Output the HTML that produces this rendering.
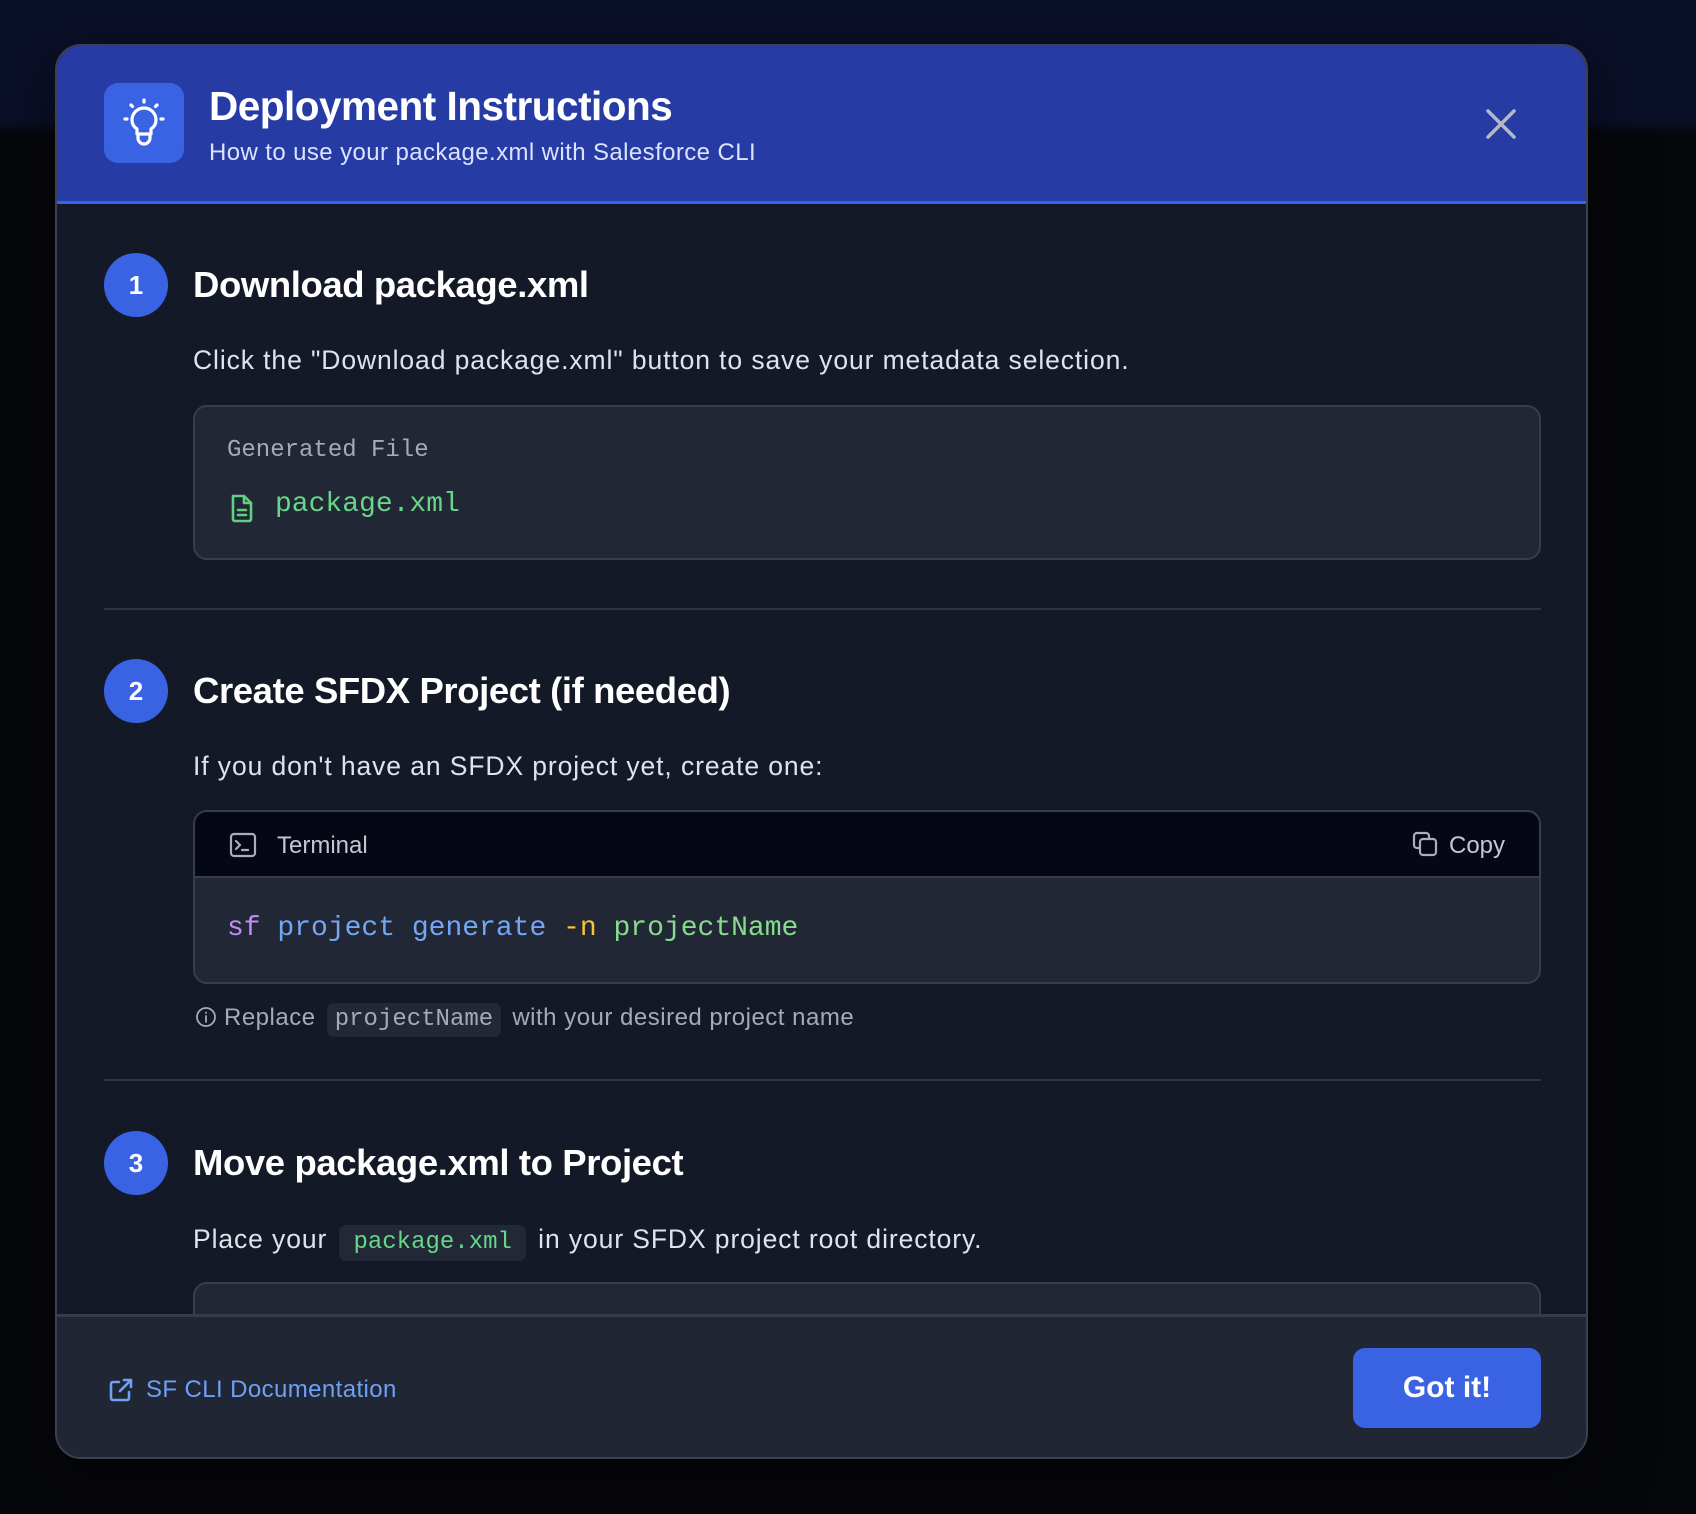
<!DOCTYPE html>
<html><head><meta charset="utf-8"><style>
*{box-sizing:border-box;margin:0;padding:0}
html,body{width:1696px;height:1514px;overflow:hidden}
body{background:linear-gradient(#0b1029 0,#0b1029 120px,#06070b 135px,#06070b 100%);font-family:"Liberation Sans",sans-serif;position:relative}
.modal{position:absolute;left:55px;top:44px;width:1533px;height:1415px;border-radius:26px;border:2px solid #394152;background:#131927;overflow:hidden;box-shadow:0 20px 60px rgba(0,0,0,.6)}
.hdr{position:absolute;left:0;top:0;right:0;height:158px;background:#263ca4;border-bottom:3px solid #3a62e6}
.ibox{position:absolute;left:47px;top:37px;width:80px;height:80px;border-radius:14px;background:#3a63e4}
.title{position:absolute;left:152px;top:37px;color:#fff;font-weight:bold;font-size:40.5px;letter-spacing:-0.5px}
.sub{position:absolute;left:152px;top:93px;color:#dbe3ff;font-size:24px;letter-spacing:0.4px}
.close{position:absolute;left:1428px;top:62px}
.abs{position:absolute}
.circ{position:absolute;left:47px;width:64px;height:64px;border-radius:50%;background:#3a63e4;color:#fff;font-weight:bold;font-size:26px;text-align:center;line-height:64px}
.h{position:absolute;left:136px;color:#fff;font-weight:bold;font-size:36.5px;letter-spacing:-0.4px;line-height:40px}
.p{position:absolute;left:136px;color:#dfe3ea;font-size:26.5px;letter-spacing:0.9px;line-height:30px}
.box{position:absolute;left:136px;width:1348px;border:2px solid #363d4b;border-radius:14px;background:#212735;overflow:hidden}
.mono{font-family:"Liberation Mono",monospace;letter-spacing:0}
.div{position:absolute;left:47px;width:1437px;height:2px;background:#2d3443}
.chip{display:inline-block;background:#222835;border-radius:7px;padding:0 8px;font-family:"Liberation Mono",monospace;letter-spacing:0}
.ftr{position:absolute;left:0;right:0;top:1268px;bottom:0;background:#202634;border-top:3px solid #353c4b}
</style></head><body>
<div class="modal">
 <div class="hdr">
  <div class="ibox"><svg width="80" height="80" viewBox="0 0 80 80" fill="none" stroke="#fff" stroke-width="3.2" stroke-linecap="round" stroke-linejoin="round"><path d="M33 46c-3-2-5-5-5-9a12 12 0 0 1 24 0c0 4-2 7-5 9v5h-14z"/><path d="M34 52v3a6 6 0 0 0 12 0v-3"/><path d="M40 17v2M27 22l1.5 1.5M53 22l-1.5 1.5M21 36h2M57 36h2"/></svg></div>
  <div class="title">Deployment Instructions</div>
  <div class="sub">How to use your package.xml with Salesforce CLI</div>
  <svg class="close" width="32" height="32" viewBox="0 0 32 32" stroke="#b4b9c8" stroke-width="3.5" stroke-linecap="round"><path d="M3 3l26 26M29 3L3 29"/></svg>
 </div>

 <div class="circ" style="top:207px">1</div>
 <div class="h" style="top:219px">Download package.xml</div>
 <div class="p" style="top:299px">Click the "Download package.xml" button to save your metadata selection.</div>
 <div class="box" style="top:359px;height:155px">
  <div class="abs mono" style="left:32px;top:30px;font-size:24px;color:#a5abb6">Generated File</div>
  <svg class="abs" style="left:35px;top:86px" width="24" height="30" viewBox="0 0 24 30" fill="none" stroke="#5fd07f" stroke-width="2.6" stroke-linejoin="round" stroke-linecap="round"><path d="M3 3h11l7 7v16a2 2 0 0 1-2 2H5a2 2 0 0 1-2-2z"/><path d="M14 3v7h7M8 17h8M8 22h8"/></svg>
  <div class="abs mono" style="left:80px;top:82px;font-size:28px;color:#67d68a">package.xml</div>
 </div>
 <div class="div" style="top:562px"></div>

 <div class="circ" style="top:613px">2</div>
 <div class="h" style="top:625px">Create SFDX Project (if needed)</div>
 <div class="p" style="top:705px">If you don't have an SFDX project yet, create one:</div>
 <div class="box" style="top:764px;height:174px">
  <div class="abs" style="left:0;top:0;right:0;height:66px;background:#050814;border-bottom:2px solid #363d4b"></div>
  <svg class="abs" style="left:34px;top:20px" width="28" height="26" viewBox="0 0 28 26" fill="none" stroke="#a8aebb" stroke-width="2.2" stroke-linecap="round" stroke-linejoin="round"><rect x="2" y="2" width="24" height="22" rx="3"/><path d="M7 9l4 4-4 4M13 18h6"/></svg>
  <div class="abs" style="left:82px;top:20px;font-size:24px;color:#c2c7d0">Terminal</div>
  <svg class="abs" style="left:1217px;top:19px" width="26" height="26" viewBox="0 0 26 26" fill="none" stroke="#a8aebb" stroke-width="2.2" stroke-linejoin="round"><rect x="8" y="8" width="16" height="16" rx="3"/><path d="M17 8V5a3 3 0 0 0-3-3H5a3 3 0 0 0-3 3v9a3 3 0 0 0 3 3h3"/></svg>
  <div class="abs" style="left:1254px;top:20px;font-size:24px;color:#c2c7d0">Copy</div>
  <div class="abs mono" style="left:32px;top:101px;font-size:28px;white-space:pre"><span style="color:#c08cf5">sf</span> <span style="color:#74a6f6">project generate</span> <span style="color:#f5c43c">-n</span> <span style="color:#86dc8c">projectName</span></div>
 </div>
 <svg class="abs" style="left:138px;top:960px" width="22" height="22" viewBox="0 0 22 22" fill="none" stroke="#a5abb6" stroke-width="1.8" stroke-linecap="round"><circle cx="11" cy="11" r="9"/><path d="M11 10v6M11 6.5v.5"/></svg>
 <div class="p" style="top:955px;left:167px;font-size:24px;letter-spacing:0.5px;color:#a5abb6;line-height:34px">Replace <span class="chip" style="font-size:24px;color:#a5abb6;margin:0 4px">projectName</span> with your desired project name</div>
 <div class="div" style="top:1033px"></div>

 <div class="circ" style="top:1085px">3</div>
 <div class="h" style="top:1097px">Move package.xml to Project</div>
 <div class="p" style="top:1175px;line-height:36px">Place your <span class="chip" style="font-size:24px;color:#67d68a;margin:0 4px;padding:0 14px">package.xml</span> in your SFDX project root directory.</div>
 <div class="box" style="top:1236px;height:120px"></div>

 <div class="ftr">
  <svg class="abs" style="left:51px;top:60px" width="26" height="26" viewBox="0 0 26 26" fill="none" stroke="#6ea0f5" stroke-width="2.6" stroke-linecap="round" stroke-linejoin="round"><path d="M11 5H5a2 2 0 0 0-2 2v14a2 2 0 0 0 2 2h14a2 2 0 0 0 2-2v-6"/><path d="M16 3h7v7M23 3L12 14"/></svg>
  <div class="abs" style="left:89px;top:59px;font-size:24px;letter-spacing:0.4px;color:#6ea0f5">SF CLI Documentation</div>
  <div class="abs" style="left:1296px;top:31px;width:188px;height:80px;border-radius:12px;background:#3a63e4;color:#fff;font-weight:bold;font-size:30px;text-align:center;line-height:80px">Got it!</div>
 </div>
</div>
</body></html>
